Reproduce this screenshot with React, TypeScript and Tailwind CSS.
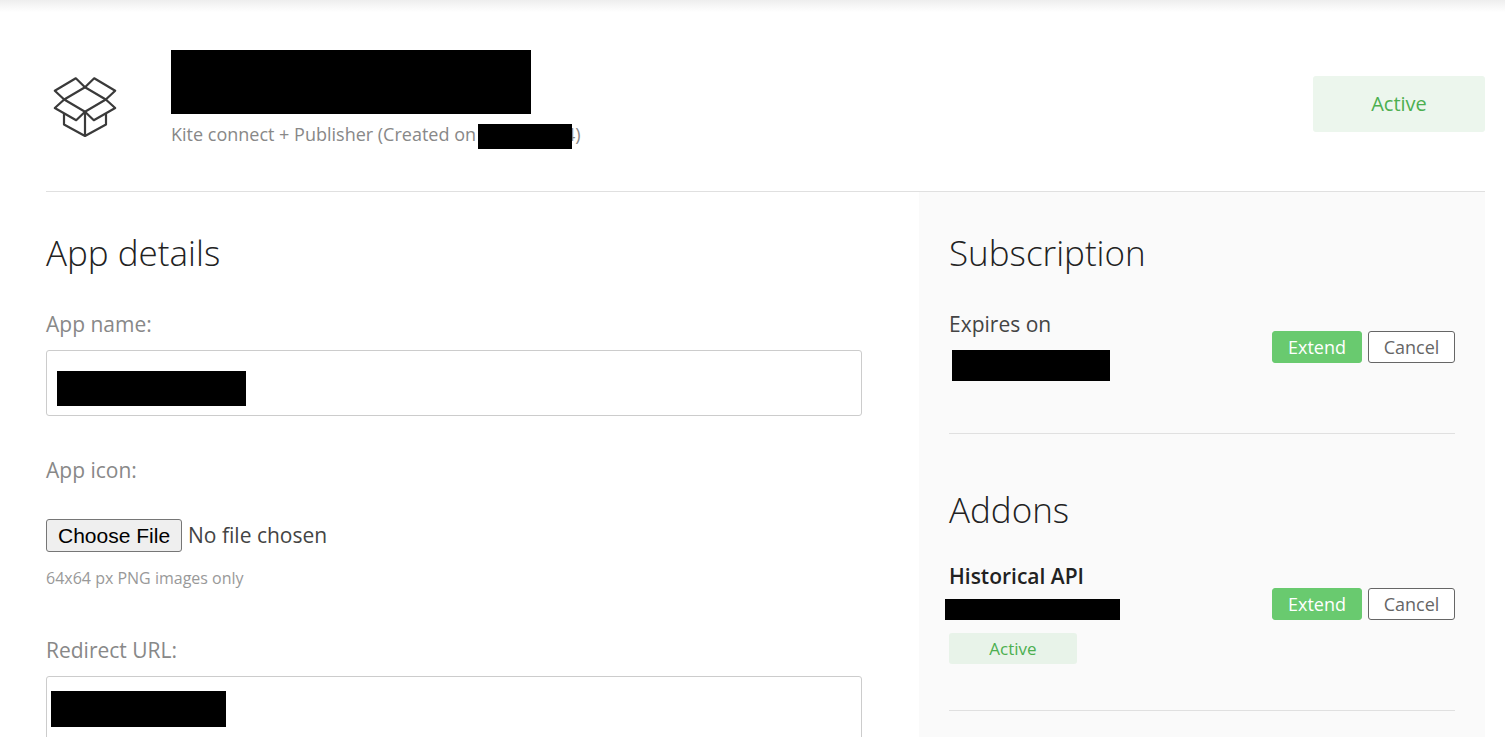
import type { ReactNode } from "react";

function BoxIcon() {
  return (
    <svg
      viewBox="0 0 64 64"
      className="mt-[25px] h-16 w-16 shrink-0"
      fill="none"
      stroke="#3a3a3a"
      strokeWidth="2.2"
      strokeLinejoin="round"
      aria-hidden="true"
    >
      <path d="M32 12.3 22.8 3.3 1.8 15.7 11.2 24.5 1.8 33 23.2 45.2 32 36.7 40.8 45.2 62.2 33 52.8 24.5 62.2 15.7 41.2 3.3Z" />
      <path d="M32 12.3 11.2 24.5 32 36.7 52.8 24.5Z" />
      <path d="M11 38.5V49.5L32 61 53 49.5V38.5M32 36.7V61" />
    </svg>
  );
}

function Actions() {
  return (
    <div className="flex shrink-0 gap-1.5 text-lg leading-[30px]">
      <button type="button" className="h-8 w-[90px] rounded-[3px] border border-[#69ca6f] bg-[#69ca6f] text-white">
        Extend
      </button>
      <button type="button" className="h-8 w-[87px] rounded-[3px] border border-[#666] bg-white text-[#666]">
        Cancel
      </button>
    </div>
  );
}

function Heading({ children }: { children: ReactNode }) {
  return <h2 className="text-[35px] leading-[50px] font-light text-[#222]">{children}</h2>;
}

export default function App() {
  return (
    <main className="h-screen overflow-hidden bg-white font-['Open_Sans',sans-serif] text-[21px] leading-[30px] text-[#444]">
      <div className="h-3 bg-linear-to-b from-[#eeeeee] to-white" />
      <div className="pr-5 pl-[46px]">
        <header className="flex items-start border-b border-[#e0e0e0] pt-[38px] pb-[42px]">
          <div className="w-[125px] shrink-0 pl-[7px]">
            <BoxIcon />
          </div>
          <div className="flex-1">
            <div className="h-16 w-[360px] bg-black" />
            <p className="mt-1.5 flex items-end text-lg leading-[29px] text-[#888]">
              <span>Kite connect + Publisher (Created on</span>
              <span className="relative z-10 -mr-[7px] ml-0.5 h-[25px] w-[94px] bg-black" />
              <span>4)</span>
            </p>
          </div>
          <div className="mt-[26px] w-[172px] rounded-[3px] bg-[#ecf6ed] py-[13px] text-center text-xl leading-[30px] text-[#4caf50]">
            Active
          </div>
        </header>

        <div className="grid min-h-screen grid-cols-[873fr_566fr]">
          <form className="pt-9 pr-[57px]">
            <Heading>App details</Heading>
            <label htmlFor="app-name" className="mt-[31px] block text-[#888]">
              App name:
            </label>
            <div className="relative mt-[11px]">
              <input id="app-name" className="block h-[66px] w-full rounded-[3px] border border-[#ccc] px-4" />
              <span className="absolute top-[21px] left-[11px] h-[35px] w-[189px] bg-black" />
            </div>
            <label htmlFor="app-icon" className="mt-[39px] block text-[#888]">
              App icon:
            </label>
            <input
              id="app-icon"
              type="file"
              className="mt-[34px] block w-full file:mr-1.5 file:h-[33px] file:rounded-[3px] file:border file:border-solid file:border-[#767676] file:bg-[#efefef] file:px-[11px] file:font-['Liberation_Sans',sans-serif] file:text-[21px] file:text-black"
            />
            <p className="mt-[13px] text-base leading-[26px] text-[#999]">64x64 px PNG images only</p>
            <label htmlFor="redirect-url" className="mt-11 block text-[#888]">
              Redirect URL:
            </label>
            <div className="relative mt-[11px]">
              <input id="redirect-url" className="block h-[66px] w-full rounded-[3px] border border-[#ccc] px-4" />
              <span className="absolute top-[15px] left-[5px] h-9 w-[175px] bg-black" />
            </div>
          </form>

          <aside className="bg-[#fafafa] px-[30px] pt-9">
            <section className="border-b border-[#e0e0e0] pb-[52px]">
              <Heading>Subscription</Heading>
              <div className="mt-[31px] flex items-start justify-between">
                <div>
                  <p>Expires on</p>
                  <div className="mt-[11px] ml-[3px] h-[31px] w-[158px] bg-black" />
                </div>
                <div className="pt-[22px]">
                  <Actions />
                </div>
              </div>
            </section>
            <section className="border-b border-[#e0e0e0] pt-[51px] pb-[46px]">
              <Heading>Addons</Heading>
              <div className="mt-[26px] flex items-start justify-between">
                <div>
                  <h3 className="font-semibold text-[#222]">Historical API</h3>
                  <div className="mt-2 -ml-1 h-[21px] w-[175px] bg-black" />
                  <div className="mt-[13px] w-32 rounded-[3px] bg-[#e8f3e9] text-center text-[17px] leading-[31px] text-[#4caf50]">
                    Active
                  </div>
                </div>
                <div className="pt-[27px]">
                  <Actions />
                </div>
              </div>
            </section>
          </aside>
        </div>
      </div>
    </main>
  );
}
